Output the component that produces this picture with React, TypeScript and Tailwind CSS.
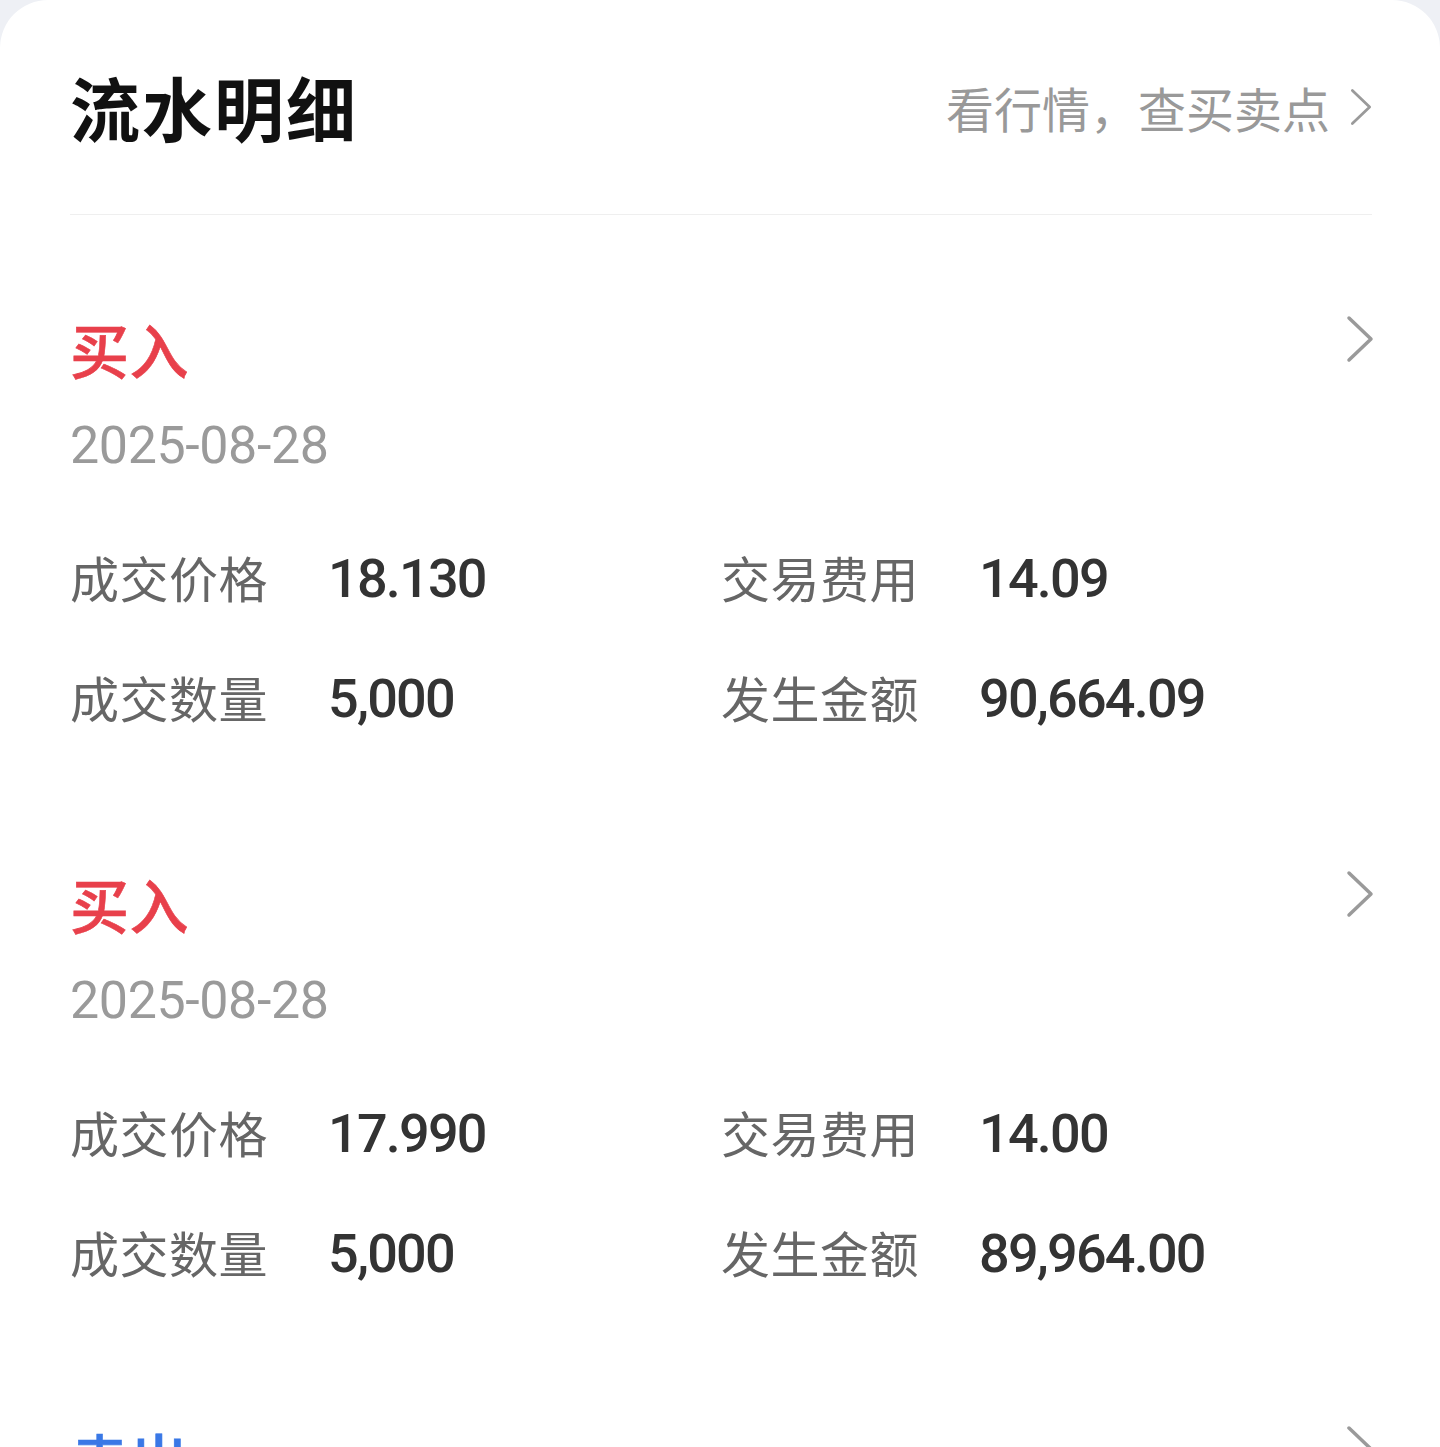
import React from "react";

const CJK = '"Noto Sans CJK SC", "Noto Sans", sans-serif';
const NUM = 'Roboto, "Noto Sans CJK SC", sans-serif';

type Rec = {
  type: string;
  color: string;
  date: string;
  price: string;
  fee: string;
  qty: string;
  amount: string;
};

const records: Rec[] = [
  { type: "买入", color: "text-[#e8404b]", date: "2025-08-28", price: "18.130", fee: "14.09", qty: "5,000", amount: "90,664.09" },
  { type: "买入", color: "text-[#e8404b]", date: "2025-08-28", price: "17.990", fee: "14.00", qty: "5,000", amount: "89,964.00" },
  { type: "卖出", color: "text-[#3a78e6]", date: "2025-08-27", price: "18.500", fee: "14.20", qty: "5,000", amount: "92,485.80" },
];

function Chevron({ className }: { className: string }) {
  return (
    <svg className={className} viewBox="0 0 28 48" fill="none">
      <path d="M3 3 L25 24 L3 45" stroke="#9a9a9a" strokeWidth="3.5" strokeLinecap="round" strokeLinejoin="round" />
    </svg>
  );
}

function Cell({ label, value }: { label: string; value: string }) {
  return (
    <div className="flex items-center h-[60px]">
      <div className="w-[258px] text-[49px] leading-[60px] text-[#666666] tracking-[0.5px]" style={{ fontFamily: CJK }}>
        {label}
      </div>
      <div
        className="text-[54px] leading-[60px] font-medium text-[#333333] tracking-[-1.8px] pt-[4px]"
        style={{ fontFamily: NUM }}
      >
        {value}
      </div>
    </div>
  );
}

function Item({ r }: { r: Rec }) {
  return (
    <div className="pt-[98px] pb-[43px]">
      <div className="flex items-start justify-between h-[72px]">
        <div
          className={`text-[59px] leading-[72px] font-medium tracking-[0.5px] ${r.color}`}
          style={{ fontFamily: CJK, WebkitTextStroke: "0.6px currentColor" }}
        >
          {r.type}
        </div>
        <Chevron className="w-[28px] h-[48px] mt-[2px] mr-[-2px]" />
      </div>
      <div
        className="mt-[31px] h-[60px] text-[52px] leading-[60px] text-[#9a9a9a] tracking-[-0.4px]"
        style={{ fontFamily: NUM }}
      >
        {r.date}
      </div>
      <div className="mt-[71px] grid grid-cols-2 gap-y-[60px]">
        <Cell label="成交价格" value={r.price} />
        <Cell label="交易费用" value={r.fee} />
        <Cell label="成交数量" value={r.qty} />
        <Cell label="发生金额" value={r.amount} />
      </div>
    </div>
  );
}

export default function App() {
  return (
    <div className="w-[1440px] h-[1447px] overflow-hidden bg-[#eef0f5]">
      <div className="bg-white rounded-t-[48px] min-h-[1447px] pl-[70px] pr-[68px]">
        <div className="h-[215px] flex items-center justify-between border-b border-[#efefef]">
          <div
            className="text-[70px] leading-[80px] font-bold text-[#111111] tracking-[2px]"
            style={{ fontFamily: CJK }}
          >
            流水明细
          </div>
          <div className="flex items-center gap-[20px]">
            <span className="text-[48px] leading-[60px] text-[#999999]" style={{ fontFamily: CJK }}>
              看行情，查买卖点
            </span>
            <Chevron className="w-[22px] h-[40px]" />
          </div>
        </div>
        {records.map((r, i) => (
          <Item key={i} r={r} />
        ))}
      </div>
    </div>
  );
}
